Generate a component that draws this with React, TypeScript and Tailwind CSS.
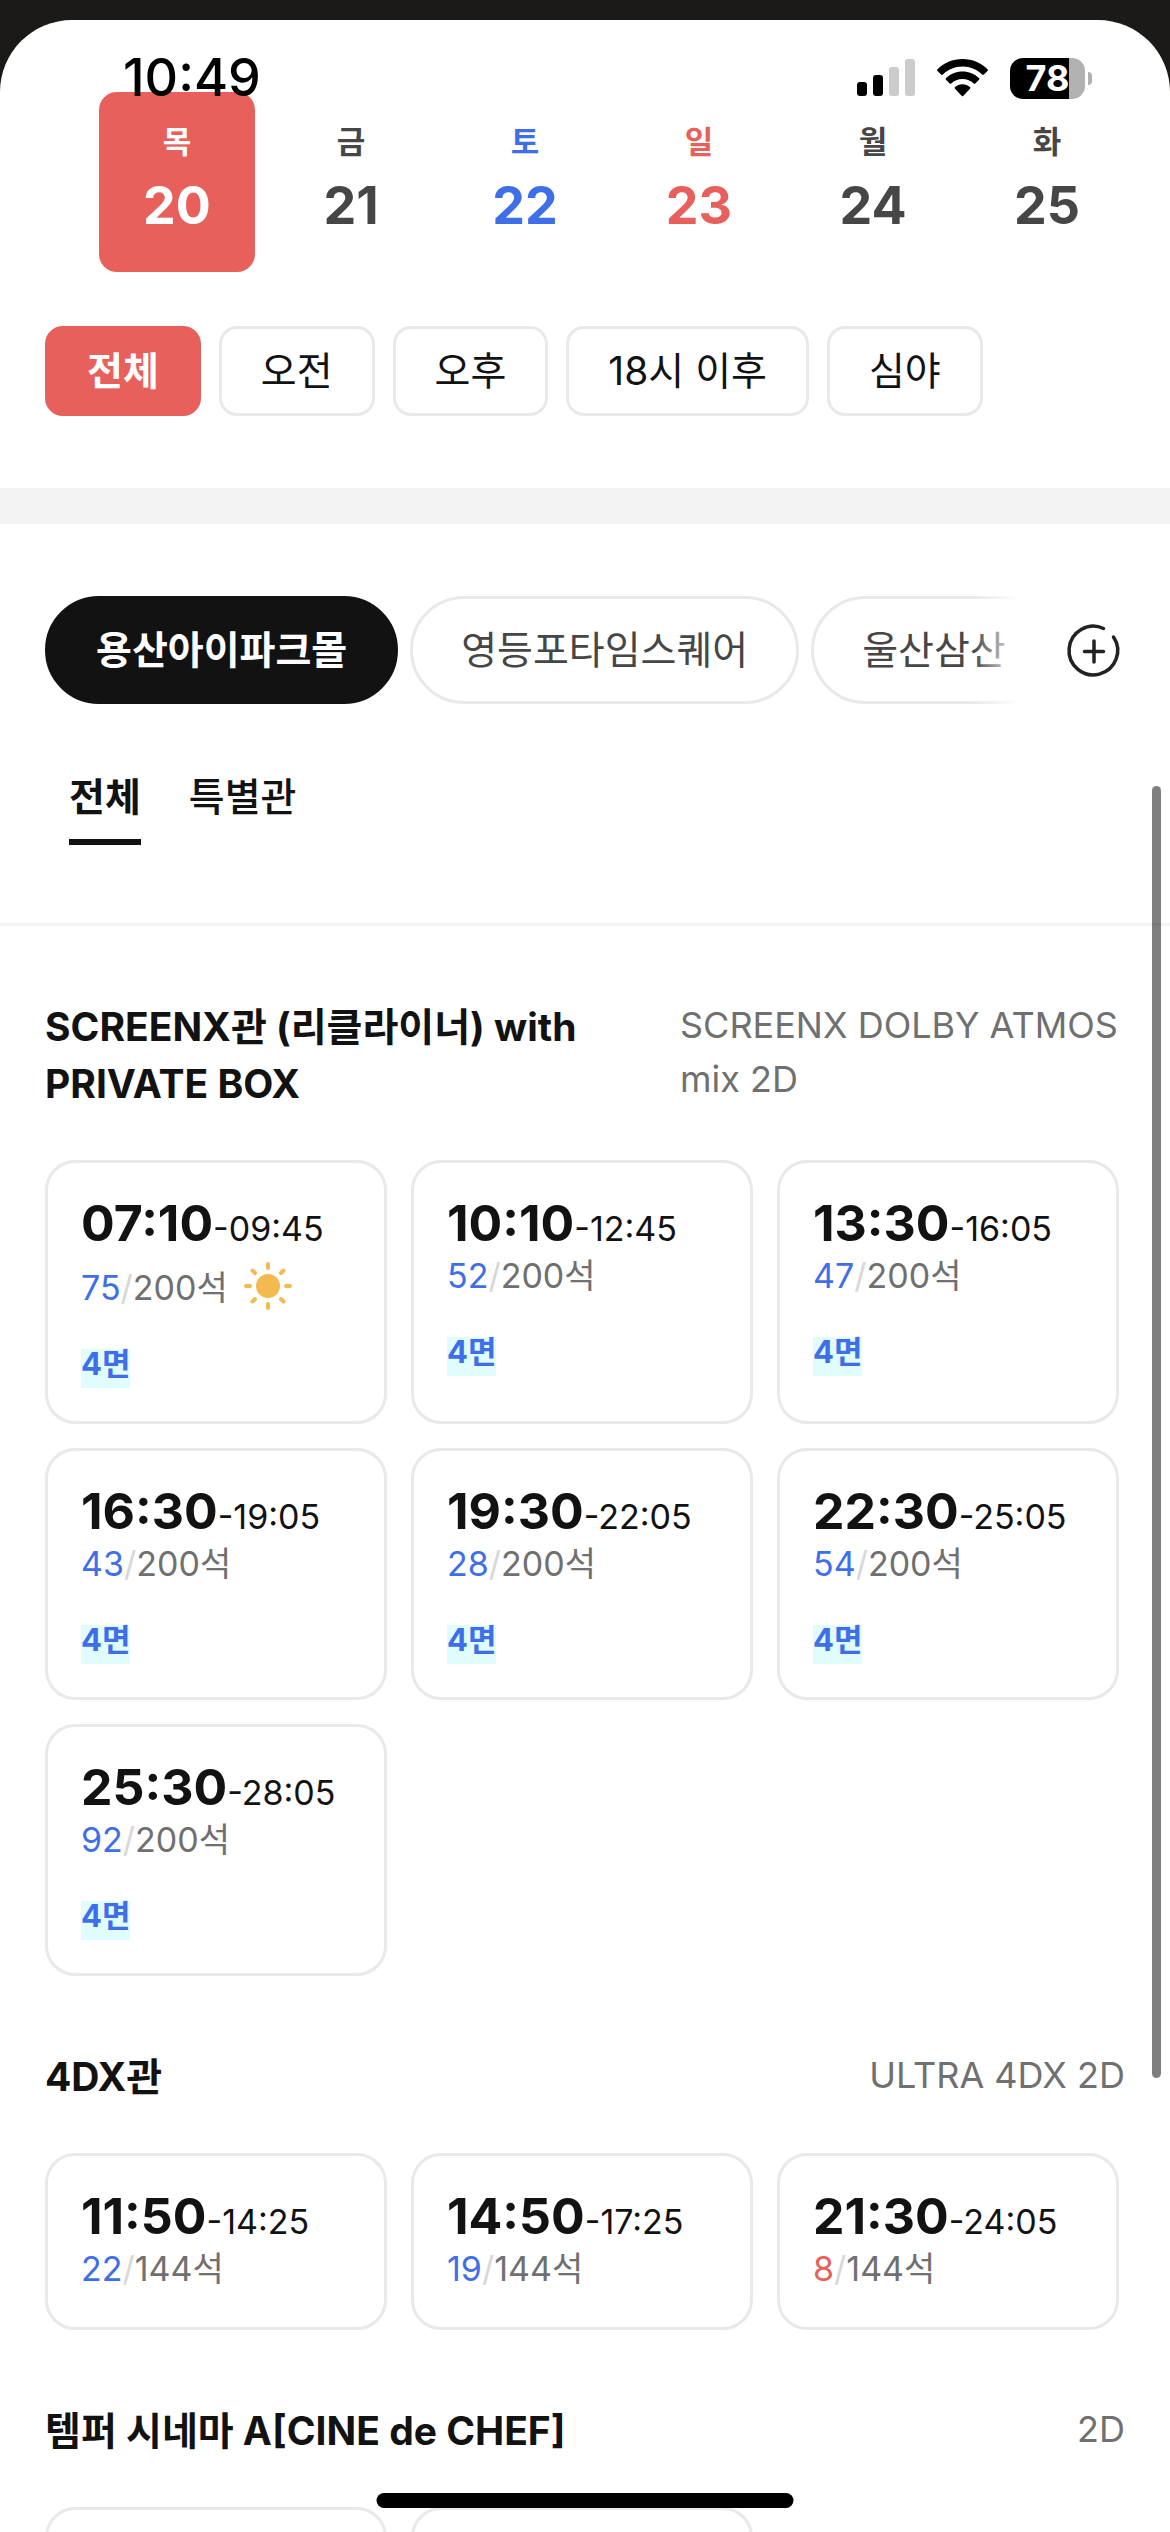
import React, { useState } from "react";
import clsx from "clsx";

interface Showtime {
  start: string;
  end: string;
  left: number;
  total: number;
  morning?: boolean;
  badge?: string;
}

interface Hall {
  name: string;
  format: string;
  shows: Showtime[];
}

const dates = [
  { day: "목", date: 20, color: "text-[#464646]" },
  { day: "금", date: 21, color: "text-[#464646]" },
  { day: "토", date: 22, color: "text-[#3f6fe8]" },
  { day: "일", date: 23, color: "text-[#e8605b]" },
  { day: "월", date: 24, color: "text-[#464646]" },
  { day: "화", date: 25, color: "text-[#464646]" },
];

const timeFilters = ["전체", "오전", "오후", "18시 이후", "심야"];
const theaters = ["용산아이파크몰", "영등포타임스퀘어", "울산삼산"];
const hallTabs = ["전체", "특별관"];

const halls: Hall[] = [
  {
    name: "SCREENX관 (리클라이너) with PRIVATE BOX",
    format: "SCREENX DOLBY ATMOS mix 2D",
    shows: [
      { start: "07:10", end: "09:45", left: 75, total: 200, morning: true, badge: "4면" },
      { start: "10:10", end: "12:45", left: 52, total: 200, badge: "4면" },
      { start: "13:30", end: "16:05", left: 47, total: 200, badge: "4면" },
      { start: "16:30", end: "19:05", left: 43, total: 200, badge: "4면" },
      { start: "19:30", end: "22:05", left: 28, total: 200, badge: "4면" },
      { start: "22:30", end: "25:05", left: 54, total: 200, badge: "4면" },
      { start: "25:30", end: "28:05", left: 92, total: 200, badge: "4면" },
    ],
  },
  {
    name: "4DX관",
    format: "ULTRA 4DX 2D",
    shows: [
      { start: "11:50", end: "14:25", left: 22, total: 144 },
      { start: "14:50", end: "17:25", left: 19, total: 144 },
      { start: "21:30", end: "24:05", left: 8, total: 144 },
    ],
  },
];

function StatusBar() {
  return (
    <div className="pointer-events-none absolute inset-x-0 top-0 z-20 flex items-center justify-between pt-[48px] pr-[78px] pl-[123px] text-black">
      <span className="text-[52px] leading-[60px] font-medium">10:49</span>
      <div className="flex items-center gap-[22px]">
        <svg width="58" height="38" viewBox="0 0 58 38">
          <rect x="0" y="23" width="10" height="14" rx="3" />
          <rect x="16" y="16" width="10" height="21" rx="3" />
          <rect x="32" y="8" width="10" height="29" rx="3" fill="#ccc" />
          <rect x="48" y="0" width="10" height="37" rx="3" fill="#ccc" />
        </svg>
        <svg width="51" height="38" viewBox="0 0 51 38">
          <path d="M25.5 0C15.6 0 6.7 3.9 0.5 10.2a1.2 1.2 0 0 0 0 1.7l3.6 3.6a1.2 1.2 0 0 0 1.7 0C10.9 10.5 17.8 7.5 25.5 7.5s14.6 3 19.7 8a1.2 1.2 0 0 0 1.7 0l3.6-3.6a1.2 1.2 0 0 0 0-1.7C44.3 3.9 35.4 0 25.5 0z" />
          <path d="M25.5 12.5c-6.4 0-12.2 2.5-16.5 6.6a1.2 1.2 0 0 0 0 1.7l3.7 3.7a1.2 1.2 0 0 0 1.6 0c2.9-2.8 6.9-4.5 11.2-4.5s8.3 1.7 11.2 4.5a1.2 1.2 0 0 0 1.6 0l3.7-3.7a1.2 1.2 0 0 0 0-1.7c-4.3-4.1-10.1-6.6-16.5-6.6z" />
          <path d="M25.5 25.2c-2.9 0-5.6 1.1-7.5 2.9a1.2 1.2 0 0 0 0 1.7l6.6 6.9a1.2 1.2 0 0 0 1.8 0l6.6-6.9a1.2 1.2 0 0 0 0-1.7c-1.9-1.8-4.6-2.9-7.5-2.9z" />
        </svg>
        <div className="flex items-center gap-[3px]">
          <div className="flex h-[41px] w-[75px] items-center justify-center rounded-[13px] bg-linear-to-r from-black from-79% to-[#b1b1b1] to-79% text-[36px] font-bold text-white">
            78
          </div>
          <div className="h-[13px] w-[4px] rounded-r-full bg-[#b1b1b1]" />
        </div>
      </div>
    </div>
  );
}

function SunIcon() {
  return (
    <svg width="48" height="63" viewBox="0 0 48 63" className="ml-4 shrink-0">
      <circle cx="24" cy="36" r="12" fill="#f3bb4f" />
      <g stroke="#f3bb4f" strokeWidth="4" strokeLinecap="round">
        <path d="M24 14v4M24 54v4M2 36h4M42 36h4" />
        <path d="M8.5 20.5l2.5 2.5M37 49l2.5 2.5M39.5 20.5l-2.5 2.5M11 49l-2.5 2.5" />
      </g>
    </svg>
  );
}

function ShowtimeCard({ show }: { show: Showtime }) {
  return (
    <button
      type="button"
      className="flex flex-col items-start rounded-[30px] border-3 border-[#e9e9e9] p-[33px] text-left"
    >
      <span className="text-[50px] leading-[54px] font-bold whitespace-nowrap text-[#121212]">
        {show.start}
        <span className="text-[34px] leading-none font-normal">-{show.end}</span>
      </span>
      <span className="flex items-end text-[34px] leading-[51px] text-[#707070]">
        <span>
          <span className={show.left < 10 ? "text-[#e8605b]" : "text-[#3f6fe8]"}>{show.left}</span>
          <span className="text-[#d8d8d8]">/</span>
          {show.total}석
        </span>
        {show.morning && <SunIcon />}
      </span>
      {show.badge && (
        <span className="mt-9 bg-[#e0fcfd] pb-[9px] text-[31px] leading-[30px] font-bold text-[#3f6fe8]">
          {show.badge}
        </span>
      )}
    </button>
  );
}

function HallHeader({ name, format }: { name: string; format: string }) {
  return (
    <div className="flex items-start justify-between gap-[50px]">
      <h2 className="max-w-[585px] text-[39px] leading-[57px] font-bold text-[#121212]">{name}</h2>
      <p className="max-w-[445px] text-[36px] leading-[54px] text-[#707070]">{format}</p>
    </div>
  );
}

export default function App() {
  const [date, setDate] = useState(20);
  const [time, setTime] = useState("전체");
  const [theater, setTheater] = useState("용산아이파크몰");
  const [tab, setTab] = useState("전체");

  return (
    <div className="relative h-screen overflow-hidden bg-[#1c1a18] pt-5 font-['Inter','Noto_Sans_CJK_KR',sans-serif]">
      <StatusBar />
      <main className="min-h-full rounded-t-[72px] bg-white pt-[72px]">
        <div className="flex gap-[18px] pr-[45px] pl-[99px]">
          {dates.map((d) => (
            <button
              key={d.date}
              type="button"
              onClick={() => setDate(d.date)}
              className={clsx(
                "flex flex-1 flex-col items-center gap-4 rounded-[18px] pt-8 pb-9 font-bold",
                date === d.date ? "bg-[#e8605b] text-white" : d.color
              )}
            >
              <span className="text-[31px] leading-9">{d.day}</span>
              <span className="text-[52px] leading-[60px]">{d.date}</span>
            </button>
          ))}
        </div>

        <div className="mt-[54px] flex gap-[18px] px-[45px]">
          {timeFilters.map((t) => (
            <button
              key={t}
              type="button"
              onClick={() => setTime(t)}
              className={clsx(
                "rounded-[18px] border-3 px-[39px] py-[15px] text-[39px] leading-[54px]",
                time === t
                  ? "border-[#e8605b] bg-[#e8605b] font-bold text-white"
                  : "border-[#e9e9e9] text-[#121212]"
              )}
            >
              {t}
            </button>
          ))}
        </div>

        <div className="mt-[72px] h-9 bg-[#f3f3f3]" />

        <div className="mt-[72px] flex items-center justify-between px-[45px]">
          <div className="relative w-[976px] overflow-hidden">
            <div className="flex gap-3">
              {theaters.map((t) => (
                <button
                  key={t}
                  type="button"
                  onClick={() => setTheater(t)}
                  className={clsx(
                    "shrink-0 rounded-full border-3 px-12 py-6 text-[39px] leading-[54px]",
                    theater === t
                      ? "border-[#121212] bg-[#121212] font-bold text-white"
                      : "border-[#e9e9e9] text-[#464646]"
                  )}
                >
                  {t}
                </button>
              ))}
            </div>
            <div className="pointer-events-none absolute inset-y-0 right-0 w-12 bg-linear-to-r from-transparent to-white" />
          </div>
          <button type="button" aria-label="극장 추가" className="shrink-0">
            <svg width="60" height="60" viewBox="0 0 60 60" fill="none" stroke="#222" strokeWidth="3.5" strokeLinecap="round">
              <path d="M38.5 8.5A24.3 24.3 0 1 0 48.5 17" />
              <path d="M29 21v21M19.500 31.500h19" />
            </svg>
          </button>
        </div>

        <div className="flex gap-12 px-[69px] pt-[63px] pb-[78px]">
          {hallTabs.map((t) => (
            <button
              key={t}
              type="button"
              onClick={() => setTab(t)}
              className={clsx(
                "border-b-6 pb-3 text-[39px] leading-[60px] text-[#121212]",
                tab === t ? "border-[#121212] font-bold" : "border-transparent font-medium"
              )}
            >
              {t}
            </button>
          ))}
        </div>

        <div className="flex flex-col gap-[72px] border-t-3 border-[#f3f3f3] px-[45px] pt-[72px]">
          {halls.map((hall) => (
            <section key={hall.name}>
              <HallHeader name={hall.name} format={hall.format} />
              <div className="mt-12 grid grid-cols-3 gap-6 pr-[6px]">
                {hall.shows.map((show) => (
                  <ShowtimeCard key={show.start} show={show} />
                ))}
              </div>
            </section>
          ))}
          <section>
            <HallHeader name="템퍼 시네마 A[CINE de CHEF]" format="2D" />
            {/* next row of showtimes, still below the fold */}
            <div className="mt-12 grid grid-cols-3 gap-6 pr-[6px]">
              <div className="h-[177px] rounded-[30px] border-3 border-[#e9e9e9]" />
              <div className="h-[177px] rounded-[30px] border-3 border-[#e9e9e9]" />
            </div>
          </section>
        </div>
      </main>

      <div className="absolute top-[786px] right-[9px] h-[1292px] w-[9px] rounded-full bg-black/50" />
      <div className="absolute bottom-6 left-1/2 h-[15px] w-[417px] -translate-x-1/2 rounded-full bg-black" />
    </div>
  );
}
